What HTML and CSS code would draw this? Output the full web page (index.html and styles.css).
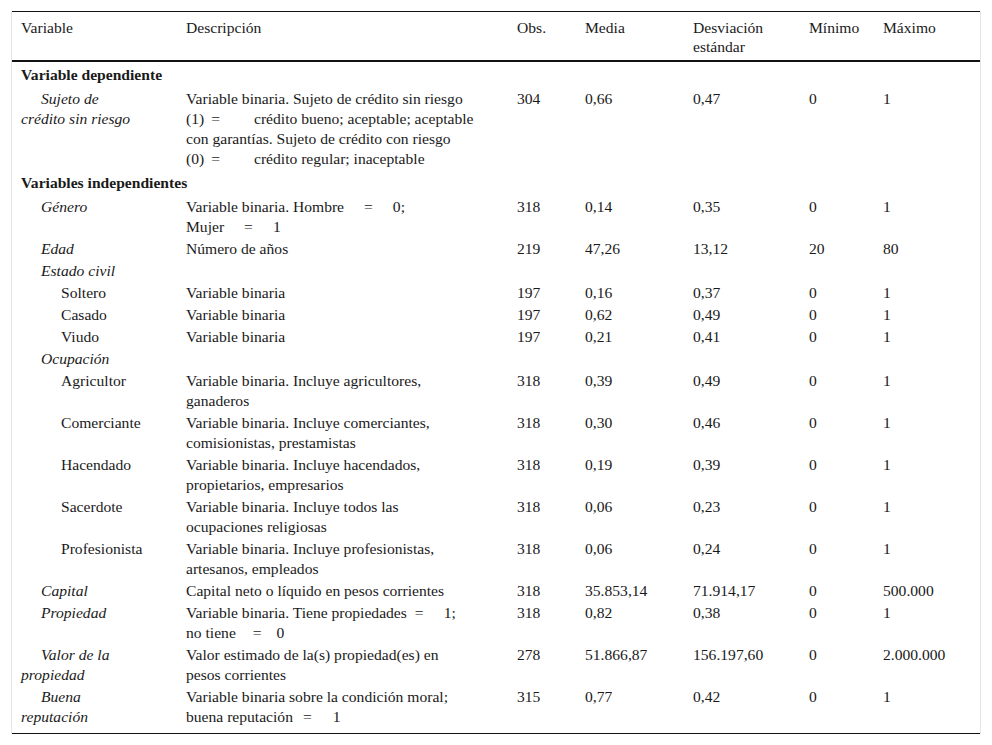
FILE: index.html
```html
<!DOCTYPE html>
<html lang="es">
<head>
<meta charset="utf-8">
<title>Tabla</title>
<link rel="stylesheet" href="styles.css">
</head>
<body>
<div class="wrap">
<table class="tbl">
<colgroup>
<col class="c1"><col class="c2"><col class="c3"><col class="c4"><col class="c5"><col class="c6"><col class="c7">
</colgroup>
<thead>
<tr><th>Variable</th><th>Descripción</th><th>Obs.</th><th>Media</th><th>Desviación<br>estándar</th><th>Mínimo</th><th>Máximo</th></tr>
</thead>
<tbody>
<tr class="grp"><td colspan="7">Variable dependiente</td></tr>
<tr><td class="i1 it">Sujeto de<br>crédito sin riesgo</td><td>Variable binaria. Sujeto de crédito sin riesgo<br>(1)<span class="eq eq-w">=</span>crédito bueno; aceptable; aceptable<br>con garantías. Sujeto de crédito con riesgo<br>(0)<span class="eq eq-w">=</span>crédito regular; inaceptable</td><td>304</td><td>0,66</td><td>0,47</td><td>0</td><td>1</td></tr>
<tr class="grp"><td colspan="7">Variables independientes</td></tr>
<tr><td class="i1 it">Género</td><td>Variable binaria. Hombre<span class="eq eq-m">=</span>0;<br>Mujer<span class="eq eq-m">=</span>1</td><td>318</td><td>0,14</td><td>0,35</td><td>0</td><td>1</td></tr>
<tr><td class="i1 it">Edad</td><td>Número de años</td><td>219</td><td>47,26</td><td>13,12</td><td>20</td><td>80</td></tr>
<tr><td class="i1 it" colspan="7">Estado civil</td></tr>
<tr><td class="i2">Soltero</td><td>Variable binaria</td><td>197</td><td>0,16</td><td>0,37</td><td>0</td><td>1</td></tr>
<tr><td class="i2">Casado</td><td>Variable binaria</td><td>197</td><td>0,62</td><td>0,49</td><td>0</td><td>1</td></tr>
<tr><td class="i2">Viudo</td><td>Variable binaria</td><td>197</td><td>0,21</td><td>0,41</td><td>0</td><td>1</td></tr>
<tr><td class="i1 it" colspan="7">Ocupación</td></tr>
<tr><td class="i2">Agricultor</td><td>Variable binaria. Incluye agricultores,<br>ganaderos</td><td>318</td><td>0,39</td><td>0,49</td><td>0</td><td>1</td></tr>
<tr><td class="i2">Comerciante</td><td>Variable binaria. Incluye comerciantes,<br>comisionistas, prestamistas</td><td>318</td><td>0,30</td><td>0,46</td><td>0</td><td>1</td></tr>
<tr><td class="i2">Hacendado</td><td>Variable binaria. Incluye hacendados,<br>propietarios, empresarios</td><td>318</td><td>0,19</td><td>0,39</td><td>0</td><td>1</td></tr>
<tr><td class="i2">Sacerdote</td><td>Variable binaria. Incluye todos las<br>ocupaciones religiosas</td><td>318</td><td>0,06</td><td>0,23</td><td>0</td><td>1</td></tr>
<tr><td class="i2">Profesionista</td><td>Variable binaria. Incluye profesionistas,<br>artesanos, empleados</td><td>318</td><td>0,06</td><td>0,24</td><td>0</td><td>1</td></tr>
<tr><td class="i1 it">Capital</td><td>Capital neto o líquido en pesos corrientes</td><td>318</td><td>35.853,14</td><td>71.914,17</td><td>0</td><td>500.000</td></tr>
<tr><td class="i1 it">Propiedad</td><td>Variable binaria. Tiene propiedades<span class="eq eq-p">=</span>1;<br>no tiene<span class="eq eq-n">=</span>0</td><td>318</td><td>0,82</td><td>0,38</td><td>0</td><td>1</td></tr>
<tr><td class="i1 it">Valor de la<br>propiedad</td><td>Valor estimado de la(s) propiedad(es) en<br>pesos corrientes</td><td>278</td><td>51.866,87</td><td>156.197,60</td><td>0</td><td>2.000.000</td></tr>
<tr class="last"><td class="i1 it">Buena<br>reputación</td><td>Variable binaria sobre la condición moral;<br>buena reputación<span class="eq eq-b">=</span>1</td><td>315</td><td>0,77</td><td>0,42</td><td>0</td><td>1</td></tr>
</tbody>
</table>
</div>
</body>
</html>
```
FILE: styles.css
```css
html, body {
  margin: 0;
  padding: 0;
  background: #ffffff;
}
body {
  font-family: "Liberation Serif", "Times New Roman", serif;
  font-size: 15.6px;
  color: #1a1a1a;
}
.wrap {
  margin: 11px 11px 0 11px;
  border-left: 1px solid #e6e6e6;
  border-right: 1px solid #e6e6e6;
}
.tbl {
  width: 100%;
  table-layout: fixed;
  border-collapse: collapse;
  border-top: 1px solid #111;
  border-bottom: 1px solid #111;
}
.c1 { width: 165px; }
.c2 { width: 331px; }
.c3 { width: 68px; }
.c4 { width: 108px; }
.c5 { width: 116px; }
.c6 { width: 74px; }
.c7 { width: 106px; }
th {
  font-weight: normal;
  text-align: left;
  vertical-align: top;
  line-height: 19px;
  padding: 6px 9px 4px 9px;
  border-bottom: 2px solid #111;
}
td {
  vertical-align: top;
  line-height: 20px;
  padding: 1px 9px;
  white-space: nowrap;
}
.grp td {
  font-weight: bold;
  padding-top: 3px;
  padding-bottom: 3px;
}
.last td {
  padding-bottom: 6px;
}
.it { font-style: italic; }
.i1 { text-indent: 20px; }
.i2 { text-indent: 40px; }
.eq { display: inline-block; }
.eq-w { margin: 0 34px 0 7px; }
.eq-m { margin: 0 20px 0 20px; }
.eq-p { margin: 0 20px 0 8px; }
.eq-n { margin: 0 15px 0 17px; }
.eq-b { margin: 0 21px 0 10px; }
```
